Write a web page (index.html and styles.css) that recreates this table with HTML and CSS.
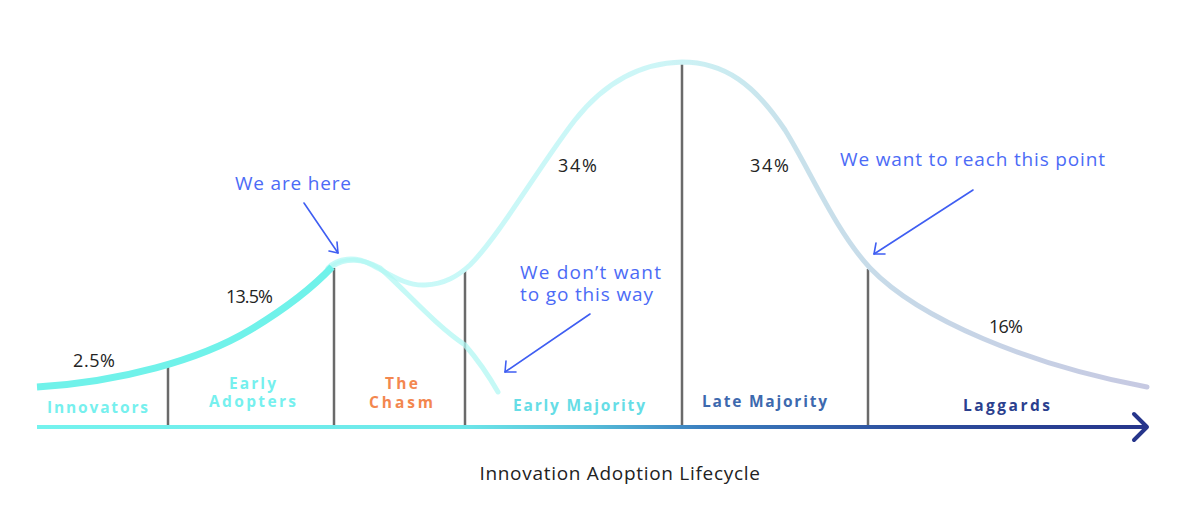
FILE: index.html
```html
<!DOCTYPE html>
<html lang="en">
<head>
<meta charset="utf-8">
<title>Innovation Adoption Lifecycle</title>
<link rel="stylesheet" href="styles.css">
</head>
<body>
<figure class="figure">
  <svg class="chart" width="1200" height="450" viewBox="0 0 1200 450" xmlns="http://www.w3.org/2000/svg">
    <defs>
      <linearGradient id="axisGrad" gradientUnits="userSpaceOnUse" x1="37" y1="0" x2="1148" y2="0">
        <stop offset="0" stop-color="#74f3ee"/>
        <stop offset="0.38" stop-color="#6de8ea"/>
        <stop offset="0.5" stop-color="#55bcd8"/>
        <stop offset="0.6" stop-color="#3b7fc0"/>
        <stop offset="0.78" stop-color="#2d4f9e"/>
        <stop offset="1" stop-color="#26358b"/>
      </linearGradient>
      <linearGradient id="curveGrad" gradientUnits="userSpaceOnUse" x1="328" y1="0" x2="1147" y2="0">
        <stop offset="0" stop-color="#c6faf8"/>
        <stop offset="0.4" stop-color="#cdf6f7"/>
        <stop offset="0.55" stop-color="#c9e3ec"/>
        <stop offset="0.7" stop-color="#c7d9e8"/>
        <stop offset="1" stop-color="#c6c9e2"/>
      </linearGradient>
    </defs>

    <!-- vertical dividers -->
    <g class="divider">
      <line x1="168" y1="366" x2="168" y2="427"/>
      <line x1="334" y1="268" x2="334" y2="427"/>
      <line x1="465" y1="269" x2="465" y2="427"/>
      <line x1="682" y1="62" x2="682" y2="427"/>
      <line x1="868" y1="269" x2="868" y2="427"/>
    </g>

    <!-- main light curve -->
    <path class="curve-light" d="M328,268 C338,258 355,256 370,264 C390,274 405,286 425,285 C445,284 458,276 470,265 C500,235 540,165 575,120 C605,82 640,63 682,62 C725,62 755,85 785,130 C810,170 835,230 870,268 C920,320 1030,365 1147,387"/>
    <!-- branch: the wrong way -->
    <path class="curve-branch" d="M333,266 C345,258 362,258 380,268 C405,290 435,325 465,345 C478,360 490,378 498,392"/>
    <!-- thick early curve -->
    <path class="curve-thick" d="M37,387 C120,382 200,360 250,330 C290,306 315,285 332,267"/>

    <!-- axis -->
    <line class="axis" x1="37" y1="427" x2="1145" y2="427"/>
    <polyline class="axis-head" points="1134,414 1147,427 1134,440"/>

    <!-- annotation arrows -->
    <g class="note-arrow">
      <line x1="304" y1="203" x2="338" y2="253"/>
      <polyline points="337,242 338,253 329,251"/>
      <line x1="590" y1="314" x2="505" y2="372"/>
      <polyline points="506,361 505,372 516,372"/>
      <line x1="973" y1="190" x2="874" y2="254"/>
      <polyline points="876,243 874,254 885,254"/>
    </g>

    <!-- percentages -->
    <g class="pct">
      <text x="73" y="367" textLength="42">2.5%</text>
      <text x="226" y="303" textLength="47">13.5%</text>
      <text x="558" y="172" textLength="39">34%</text>
      <text x="750" y="172" textLength="39">34%</text>
      <text x="989" y="333" textLength="34">16%</text>
    </g>

    <!-- notes -->
    <g class="note">
      <text x="235" y="190" textLength="116">We are here</text>
      <text x="520" y="279" textLength="141">We don’t want</text>
      <text x="520" y="301" textLength="133">to go this way</text>
      <text x="840" y="166" textLength="265">We want to reach this point</text>
    </g>

    <!-- segment labels -->
    <g class="seg">
      <text class="seg-cyan" x="47" y="413" textLength="101">Innovators</text>
      <text class="seg-cyan" x="229" y="389" textLength="47">Early</text>
      <text class="seg-cyan" x="209" y="407" textLength="87">Adopters</text>
      <text class="seg-orange" x="385" y="389" textLength="33">The</text>
      <text class="seg-orange" x="369" y="408" textLength="64">Chasm</text>
      <text class="seg-teal" x="513" y="411" textLength="132">Early Majority</text>
      <text class="seg-blue" x="702" y="407" textLength="125">Late Majority</text>
      <text class="seg-navy" x="963" y="411" textLength="87">Laggards</text>
    </g>
  </svg>
  <figcaption class="caption">Innovation Adoption Lifecycle</figcaption>
</figure>
</body>
</html>
```

FILE: styles.css
```css
html, body {
  margin: 0;
  padding: 0;
  background: #ffffff;
}

.figure {
  margin: 0;
  width: 1200px;
  height: 518px;
  display: flex;
  flex-direction: column;
}

.chart {
  display: block;
  flex: none;
}

.divider line {
  stroke: #6a6a6a;
  stroke-width: 2.5;
}

.curve-light {
  fill: none;
  stroke: url(#curveGrad);
  stroke-width: 5;
  stroke-linecap: round;
}

.curve-branch {
  fill: none;
  stroke: #b2f7f3;
  stroke-opacity: 0.75;
  stroke-width: 5;
  stroke-linecap: round;
}

.curve-thick {
  fill: none;
  stroke: #70f2ea;
  stroke-width: 7;
  stroke-linecap: butt;
}

.axis {
  stroke: url(#axisGrad);
  stroke-width: 4;
}

.axis-head {
  fill: none;
  stroke: #26358b;
  stroke-width: 4;
  stroke-linecap: round;
  stroke-linejoin: round;
}

.note-arrow line,
.note-arrow polyline {
  fill: none;
  stroke: #3f5ef2;
  stroke-width: 1.6;
  stroke-linecap: round;
  stroke-linejoin: round;
}

.pct text {
  font-family: "Open Sans", "Noto Sans", sans-serif;
  font-size: 18px;
  font-weight: 400;
  fill: #232323;
}

.note text {
  font-family: "Open Sans", "Noto Sans", sans-serif;
  font-size: 19px;
  font-weight: 400;
  fill: #4c6bf6;
}

.seg text {
  font-family: "Open Sans", "Noto Sans", sans-serif;
  font-size: 15.5px;
  font-weight: 700;
}

.seg-cyan { fill: #76f0ee; }
.seg-orange { fill: #f3874f; }
.seg-teal { fill: #66dde6; }
.seg-blue { fill: #3d69ae; }
.seg-navy { fill: #2b3f8e; }

.caption {
  margin: 0;
  padding: 10px 0 0 40px;
  text-align: center;
  font-family: "Open Sans", "Noto Sans", sans-serif;
  font-size: 19px;
  color: #222222;
  letter-spacing: 0.7px;
}
```
